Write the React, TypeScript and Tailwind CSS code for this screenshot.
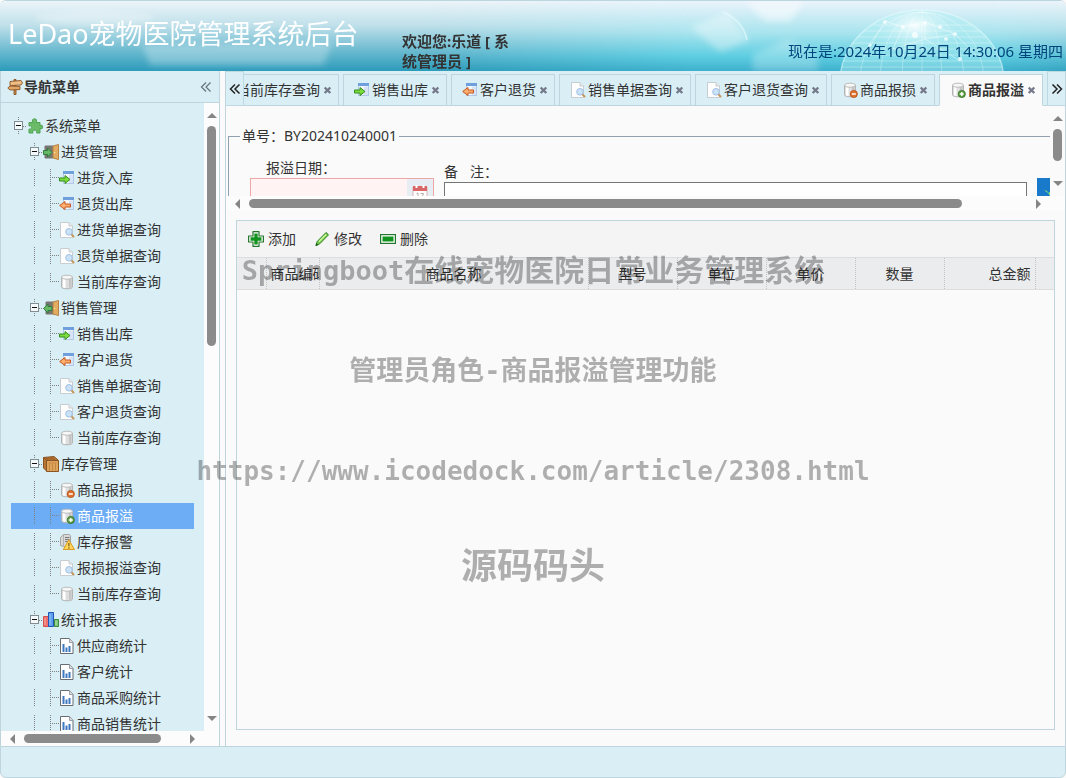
import React from "react";

type IconName =
  | "signpost" | "puzzle" | "doorIn" | "doorOut" | "goIn" | "goOut" | "search" | "db"
  | "dbMinus" | "dbPlus" | "box" | "alarm" | "chart" | "report" | "add" | "edit" | "remove" | "calendar" | "close";

const Cylinder = () => (
  <g>
    <path d="M2.500 3.200v9.600c0 1.200 2.300 2 5.500 2s5.500-.8 5.500-2V3.200z" fill="#dedede" stroke="#b4b4b4" />
    <path d="M4 4v9.400l2.500.7V4z" fill="#fff" />
    <path d="M10 5v9l2.500-.8V4z" fill="#c4c4c4" />
    <ellipse cx="8" cy="3.200" rx="5.500" ry="2" fill="#f7f7f7" stroke="#bdbdbd" />
  </g>
);

const MiniWindow = () => (
  <g>
    <rect x="4.500" y="1.500" width="10" height="12" fill="#f3f8ff" stroke="#b4c8e8" />
    <rect x="4" y="1" width="11" height="3" fill="#6f9fdc" />
    <path d="M10 4.500h4v8.500h-4z" fill="#d6e3f7" />
  </g>
);

const drawings: Record<IconName, React.ReactNode> = {
  signpost: (
    <g stroke="#8a5526" strokeWidth=".9">
      <path d="M7 .5h2v15H7z" fill="#c98a4b" />
      <path d="M3 2.500l11-1L15.500 4 14 6 3 6.500z" fill="#efbe86" />
      <path d="M13 7.500L3 7 .8 9 3 11l10-.5z" fill="#e4a869" />
    </g>
  ),
  puzzle: (
    <path d="M2 4.500h4c-1.200-1.700-.7-3.700 1.500-3.700s2.700 2 1.500 3.700h4v3.300c1.700-1.200 2.700-.6 2.700 1.200s-1 2.400-2.700 1.200v4.800H9.600c.8-2-.4-2.800-1.800-2.800s-2.600.8-1.800 2.800H2v-4c2 .6 2.600-.4 2.600-1.600S4 7.500 2 8z" fill="#6cbb69" stroke="#4fa354" />
  ),
  doorIn: (
    <g>
      <path d="M2 2h8v12H2z" fill="#77766f" stroke="#777" />
      <path d="M10 2l5.500-1.500v15L10 14z" fill="#e2ab62" stroke="#b98242" />
      <circle cx="11.500" cy="8.500" r=".7" fill="#fff2b0" />
      <path d="M.5 6.500h4V4l4.500 4.500L4.500 13v-2.500h-4z" fill="#66b867" stroke="#2e7d3c" />
    </g>
  ),
  doorOut: (
    <g>
      <path d="M3 2h8v12H3z" fill="#77766f" stroke="#777" />
      <path d="M10 2l5.500-1.500v15L10 14z" fill="#e2ab62" stroke="#b98242" />
      <circle cx="11.500" cy="8.500" r=".7" fill="#fff2b0" />
      <path d="M9 6.500H5V4L.5 8.500 5 13v-2.500h4z" fill="#66b867" stroke="#2e7d3c" />
    </g>
  ),
  goIn: (
    <g>
      <MiniWindow />
      <path d="M.5 8H6V5.500l5 4-5 4V11H.5z" fill="#7fdc3f" stroke="#318d1c" />
    </g>
  ),
  goOut: (
    <g>
      <MiniWindow />
      <path d="M11.500 8H6V5.500l-5.300 4 5.300 4V11h5.500z" fill="#ffae70" stroke="#c4591c" />
    </g>
  ),
  search: (
    <g>
      <path d="M1.500.5h8.500l3.500 3.500v11.500h-12z" fill="#fdfdfd" stroke="#c8cdd2" />
      <path d="M10 .5V4h3.500" fill="#e8e8e8" stroke="#c8cdd2" />
      <path d="M12.500 12.500L14.500 14.500" stroke="#c4975c" strokeWidth="2" strokeLinecap="round" />
      <circle cx="10" cy="9.800" r="3.300" fill="#c9e2f8" stroke="#a0bfe0" />
    </g>
  ),
  db: <Cylinder />,
  dbMinus: (
    <g>
      <Cylinder />
      <circle cx="11.800" cy="12" r="3.600" fill="#e0702c" stroke="#b24d13" strokeWidth=".8" />
      <path d="M9.800 12h4" stroke="#fff" strokeWidth="1.500" />
    </g>
  ),
  dbPlus: (
    <g>
      <Cylinder />
      <circle cx="11.800" cy="12" r="3.600" fill="#5d9f45" stroke="#34701f" strokeWidth=".8" />
      <path d="M9.800 12h4M11.800 10v4" stroke="#fff" strokeWidth="1.400" />
    </g>
  ),
  box: (
    <g stroke="#8a5424">
      <path d="M.5 1.500L11 .5l4 3.500v11.500H4L.5 12z" fill="#b87433" />
      <path d="M3.500 4.500h12v11h-12z" fill="#dfa45c" />
      <path d="M.5 1.500l3 3M2.500 1.500L6 4.500M5.500 1l3.500 3.500M8.500 1L12 4.500" stroke="#8a5424" />
      <path d="M5.500 7h8M6.500 7.500v7M9.500 7.500v7M12.500 7.500v7" stroke="#c28743" />
    </g>
  ),
  alarm: (
    <g>
      <path d="M4.500.5h6l1 1v11h-7l-3-1v-8z" fill="#d9d9d9" stroke="#a5a5a5" />
      <path d="M4.500 1v11" stroke="#b2b2b2" />
      <path d="M6 3.500h4.500M6 5.500h4.500M6 7.500h3" stroke="#777" />
      <path d="M9.800 5.800l5.700 9.700H4.300z" fill="#ffd65c" stroke="#dd9a1e" strokeLinejoin="round" />
      <path d="M9.900 9v3.300M9.900 13.200v1.200" stroke="#7c5512" strokeWidth="1.200" />
    </g>
  ),
  chart: (
    <g>
      <path d="M.5 4.500h5v10h-5z" fill="#f0706b" stroke="#d35050" />
      <path d="M5.500.5h5v14h-5z" fill="#5d9ff0" stroke="#1e55b5" />
      <path d="M11.500 7.500h4v7h-4z" fill="#7dc67a" stroke="#3d8b40" />
      <path d="M2 6v7M7 2v11M13 9v4" stroke="#fff" strokeOpacity=".4" />
    </g>
  ),
  report: (
    <g>
      <path d="M1.500.5h9l3.500 4v11H1.500z" fill="#fff" stroke="#686c73" />
      <path d="M10.500.5v4H14" fill="#ddd" stroke="#9b9fa6" />
      <path d="M4.500 6v8M7.500 9.500V14M10.500 8v6" stroke="#3f79c0" strokeWidth="2" />
    </g>
  ),
  add: (
    <g>
      <path d="M5 .6h6V5h4.400v6H11v4.400H5V11H.6V5H5z" fill="#fff" stroke="#23762b" strokeWidth="1.200" strokeLinejoin="round" />
      <path d="M8 2.500v11M2.500 8h11" stroke="#129320" strokeWidth="3.400" />
    </g>
  ),
  edit: (
    <g>
      <path d="M2 14.500l1.200-4L12 1.500l2.500 2.300-8.800 9z" fill="#7fd24d" stroke="#27791f" />
      <path d="M5 10.500l7-7" stroke="#d2f7a6" strokeWidth="1.200" />
      <path d="M1.500 15l.8-3 2.200 2z" fill="#195b16" />
    </g>
  ),
  remove: (
    <g>
      <rect x=".6" y="3.600" width="14.800" height="8.800" fill="#fff" stroke="#23762b" strokeWidth="1.200" />
      <rect x="2.500" y="5.500" width="11" height="5" fill="#129320" />
    </g>
  ),
  calendar: (
    <g>
      <path d="M1 3h14v12H1z" fill="#fff" stroke="#dcb6b6" />
      <path d="M1 2h14v5H1z" fill="#d96767" />
      <path d="M4.500 1v3M11.500 1v3" stroke="#fff" strokeWidth="2" />
      <path d="M4.500 9.500L6 9v6M8.500 9.500h3L9.500 15" stroke="#b9a9a9" fill="none" />
    </g>
  ),
  close: <path d="M4.700 5.500l5.600 5.500M10.300 5.500L4.700 11" stroke="#75798a" strokeWidth="2.400" />,
};

function Icon({ name }: { name: IconName }) {
  return (
    <svg viewBox="0 0 16 16" className="h-4 w-4 shrink-0" fill="none" aria-hidden="true">
      {drawings[name]}
    </svg>
  );
}

function Chevrons({ right, thin }: { right?: boolean; thin?: boolean }) {
  return (
    <svg viewBox="0 0 12 12" className="h-3 w-3" fill="none" stroke={thin ? "#66747a" : "#222"} strokeWidth={thin ? "1.2" : "1.5"} aria-hidden="true">
      <path d={right ? "M1.500 1.500L6 6l-4.500 4.500M6 1.500L10.500 6 6 10.500" : "M6 1.500L1.500 6 6 10.500M10.500 1.500L6 6l4.500 4.500"} />
    </svg>
  );
}

const arrows = {
  up: "M4 0l5 5H-1z",
  down: "M-1 0h10L4 5z",
  left: "M5-1v10L0 4z",
  right: "M0-1v10l5-5z",
};

function Arrow({ dir }: { dir: keyof typeof arrows }) {
  const vertical = dir === "up" || dir === "down";
  return (
    <svg viewBox={vertical ? "-1 0 10 5" : "0 -1 5 10"} className={vertical ? "h-[5px] w-[10px] shrink-0" : "h-[10px] w-[5px] shrink-0"} aria-hidden="true">
      <path d={arrows[dir]} fill="#858585" />
    </svg>
  );
}

type Node = { text: string; icon: IconName; depth: 0 | 1 | 2; last?: boolean; selected?: boolean };

const nodes: Node[] = [
  { text: "系统菜单", icon: "puzzle", depth: 0 },
  { text: "进货管理", icon: "doorIn", depth: 1 },
  { text: "进货入库", icon: "goIn", depth: 2 },
  { text: "退货出库", icon: "goOut", depth: 2 },
  { text: "进货单据查询", icon: "search", depth: 2 },
  { text: "退货单据查询", icon: "search", depth: 2 },
  { text: "当前库存查询", icon: "db", depth: 2, last: true },
  { text: "销售管理", icon: "doorOut", depth: 1 },
  { text: "销售出库", icon: "goIn", depth: 2 },
  { text: "客户退货", icon: "goOut", depth: 2 },
  { text: "销售单据查询", icon: "search", depth: 2 },
  { text: "客户退货查询", icon: "search", depth: 2 },
  { text: "当前库存查询", icon: "db", depth: 2, last: true },
  { text: "库存管理", icon: "box", depth: 1 },
  { text: "商品报损", icon: "dbMinus", depth: 2 },
  { text: "商品报溢", icon: "dbPlus", depth: 2, selected: true },
  { text: "库存报警", icon: "alarm", depth: 2 },
  { text: "报损报溢查询", icon: "search", depth: 2 },
  { text: "当前库存查询", icon: "db", depth: 2, last: true },
  { text: "统计报表", icon: "chart", depth: 1 },
  { text: "供应商统计", icon: "report", depth: 2 },
  { text: "客户统计", icon: "report", depth: 2 },
  { text: "商品采购统计", icon: "report", depth: 2 },
  { text: "商品销售统计", icon: "report", depth: 2 },
];

function Guide({ kind }: { kind: "line" | "join" | "joinLast" | "toggle" }) {
  return (
    <svg viewBox="0 0 16 18" className="h-[18px] w-4 shrink-0" fill="none" aria-hidden="true">
      {kind === "toggle" ? (
        <g>
          <path d="M7.500 0v18M12 9.500h4" stroke="#808080" strokeDasharray="1 1" />
          <rect x="3.500" y="4.500" width="8" height="8" fill="#f4fafc" stroke="#838c90" />
          <path d="M5 8.500h5" stroke="#111" />
        </g>
      ) : (
        <g stroke="#808080" strokeDasharray="1 1">
          <path d={kind === "joinLast" ? "M7.500 0v9" : "M7.500 0v18"} />
          {kind !== "line" && <path d="M9 8.500h7" />}
        </g>
      )}
    </svg>
  );
}

function Tree() {
  return (
    <ul className="min-w-0 flex-1 overflow-hidden bg-[#d9eef5] p-[10px]">
      {nodes.map((n, i) => (
        <li key={i}>
          <a
            href="#"
            className={`flex h-[26px] items-center whitespace-nowrap ${n.selected ? "bg-[#6cadf6] text-white" : "text-[#333]"}`}
          >
            {n.depth > 0 && <span className="w-4 shrink-0" />}
            {n.depth === 2 && <Guide kind="line" />}
            {n.depth === 2 ? <Guide kind={n.last ? "joinLast" : "join"} /> : <Guide kind="toggle" />}
            <Icon name={n.icon} />
            <span className="pl-[2px]">{n.text}</span>
          </a>
        </li>
      ))}
    </ul>
  );
}

const tabs: { text: string; icon: IconName; active?: boolean }[] = [
  { text: "当前库存查询", icon: "db" },
  { text: "销售出库", icon: "goIn" },
  { text: "客户退货", icon: "goOut" },
  { text: "销售单据查询", icon: "search" },
  { text: "客户退货查询", icon: "search" },
  { text: "商品报损", icon: "dbMinus" },
  { text: "商品报溢", icon: "dbPlus", active: true },
];

function Tabs() {
  return (
    <div className="flex h-[35px] shrink-0 bg-[#d9eef5]">
      <button aria-label="向左滚动" className="flex w-[18px] shrink-0 items-center justify-center border border-l-0 border-[#bfd9e2]">
        <Chevrons />
      </button>
      <div className="flex min-w-0 flex-1 items-end justify-end gap-1 overflow-hidden pr-1 shadow-[inset_0_-1px_0_#bfd5dd]">
        {tabs.map((t) => (
          <div
            key={t.text + t.icon}
            className={`flex h-8 shrink-0 items-center border border-[#bfd5dd] pl-[10px] pr-[2px] ${t.active ? "border-b-[#fafafa] bg-[#fafafa] font-bold" : ""}`}
          >
            <button className="flex items-center gap-[2px] whitespace-nowrap">
              <Icon name={t.icon} />
              {t.text}
            </button>
            <button aria-label="关闭">
              <Icon name="close" />
            </button>
          </div>
        ))}
      </div>
      <button aria-label="向右滚动" className="flex w-[18px] shrink-0 items-center justify-center border border-r-0 border-[#bfd9e2]">
        <Chevrons right />
      </button>
    </div>
  );
}

function HeaderArt() {
  return (
    <svg className="absolute inset-0 h-full w-full" viewBox="0 0 1066 70" preserveAspectRatio="none" aria-hidden="true">
      <defs>
        <linearGradient id="sky" x1="0" y1="0" x2="0" y2="1">
          <stop offset="0" stopColor="#ecf5f9" />
          <stop offset=".35" stopColor="#bfe0ea" />
          <stop offset=".75" stopColor="#62b6cd" />
          <stop offset="1" stopColor="#2c9bba" />
        </linearGradient>
        <linearGradient id="cyan" x1="0" y1="0" x2="0" y2="1">
          <stop offset="0" stopColor="#eaf3fb" />
          <stop offset=".45" stopColor="#a9e4ee" />
          <stop offset=".8" stopColor="#5ccde1" />
          <stop offset="1" stopColor="#3fb0cd" />
        </linearGradient>
        <linearGradient id="fade" x1="0" x2="1">
          <stop offset=".4" stopColor="#000" />
          <stop offset=".65" stopColor="#fff" />
          <stop offset=".93" stopColor="#fff" />
          <stop offset="1" stopColor="#777" />
        </linearGradient>
        <mask id="side"><rect width="1066" height="70" fill="url(#fade)" /></mask>
        <radialGradient id="glow" cx=".5" cy=".4">
          <stop offset="0" stopColor="#fff" stopOpacity=".9" />
          <stop offset="1" stopColor="#7cdcea" stopOpacity="0" />
        </radialGradient>
        <filter id="soft"><feGaussianBlur stdDeviation="3" /></filter>
        <clipPath id="ball"><ellipse cx="922" cy="80" rx="82" ry="71" /></clipPath>
      </defs>
      <rect width="1066" height="70" fill="url(#sky)" />
      <rect width="1066" height="70" fill="url(#cyan)" mask="url(#side)" />
      <g filter="url(#soft)" fill="#fff">
        <ellipse cx="95" cy="17" rx="60" ry="7" opacity=".3" />
        <path d="M142 44l190-2-8 22H150z" opacity=".28" />
        <path d="M690 26l38-15 22 28-30 12z" opacity=".35" />
        <path d="M745 0h60l-15 20h-25z" opacity=".5" />
        <path d="M752 54l36-16 30 14v18h-65z" opacity=".25" />
      </g>
      <path d="M723 11q20 9 24 28" fill="none" stroke="#eafcff" strokeOpacity=".6" strokeWidth="1.500" />
      <g clipPath="url(#ball)">
        <rect x="840" width="170" height="70" fill="#bdf4f6" opacity=".4" />
        <ellipse cx="915" cy="32" rx="60" ry="36" fill="url(#glow)" />
        <g fill="none" stroke="#fff" strokeOpacity=".3">
          <ellipse cx="922" cy="80" rx="62" ry="69" />
          <ellipse cx="922" cy="80" rx="42" ry="69" />
          <ellipse cx="922" cy="80" rx="20" ry="69" />
          <path d="M840 66h170M840 60h170M840 54h170M840 48h170M840 42h170M840 36h170M840 30h170M840 24h170M922 0v70" />
        </g>
        <path d="M885 20l18 6 22-5 30 12 22 22M885 20l-20 34M903 26l-10 22 32-10 30-5M925 21v17l35 22" fill="none" stroke="#fff" strokeOpacity=".4" />
        <g fill="#fff" fillOpacity=".7">
          <circle cx="903" cy="26" r="2" /><circle cx="925" cy="22" r="2" /><circle cx="940" cy="26" r="2" />
          <circle cx="955" cy="33" r="2" /><circle cx="885" cy="21" r="2" /><circle cx="960" cy="58" r="2" />
          <circle cx="915" cy="34" r="3" /><circle cx="946" cy="38" r="2" /><circle cx="870" cy="44" r="1.500" />
        </g>
      </g>
      <ellipse cx="922" cy="80" rx="82" ry="71" fill="none" stroke="#effeff" strokeOpacity=".45" strokeWidth="1.500" />
    </svg>
  );
}

const columns = [
  { text: "", width: "w-[29px]", align: "text-center" },
  { text: "商品编码", width: "w-[53px]", align: "text-left" },
  { text: "商品名称", width: "", align: "text-center" },
  { text: "型号", width: "w-[89px]", align: "text-center" },
  { text: "单位", width: "w-[89px]", align: "text-center" },
  { text: "单价", width: "w-[89px]", align: "text-center" },
  { text: "数量", width: "w-[89px]", align: "text-center" },
  { text: "总金额", width: "w-[91px]", align: "text-right" },
];

const tools: { text: string; icon: IconName }[] = [
  { text: "添加", icon: "add" },
  { text: "修改", icon: "edit" },
  { text: "删除", icon: "remove" },
];

export default function App() {
  return (
    <div className="relative flex h-screen flex-col overflow-hidden bg-[#fafafa] font-['Noto_Sans','Noto_Sans_CJK_SC',sans-serif] text-sm leading-5 text-[#333]">
      <header className="relative flex h-[71px] shrink-0 overflow-hidden rounded-t-md border-t border-[#bcd6df]">
        <HeaderArt />
        <h1 className="relative w-[402px] shrink-0 pl-2 pt-[13px] text-[27px] leading-10 text-white">LeDao宠物医院管理系统后台</h1>
        <div className="relative w-[120px] shrink-0 pt-[30px] text-[15px] font-bold leading-5">欢迎您:乐道 [ 系统管理员 ]</div>
        <div className="relative flex-1 whitespace-nowrap pr-[3px] pt-[40px] text-right text-[15px] leading-5 text-[#00457b]">
          现在是:2024年10月24日 14:30:06 星期四
        </div>
      </header>

      <div className="flex min-h-0 flex-1">
        <aside className="flex w-[220px] shrink-0 flex-col border-x border-[#bfd5dd]">
          <div className="flex h-8 shrink-0 items-center border-b border-[#bfd5dd] bg-[#d9eef5] pl-[6px] pr-[7px]">
            <Icon name="signpost" />
            <h2 className="flex-1 pl-px font-bold">导航菜单</h2>
            <button aria-label="折叠菜单"><Chevrons thin /></button>
          </div>
          <div className="flex min-h-0 flex-1">
            <Tree />
            <div className="flex w-[15px] shrink-0 flex-col items-center bg-[#fcfcfc] pb-[10px] pt-[10px]">
              <Arrow dir="up" />
              <div className="mt-2 h-[220px] w-[9px] rounded-full bg-[#8b8b8b]" />
              <div className="flex-1" />
              <Arrow dir="down" />
            </div>
          </div>
          <div className="flex h-[15px] shrink-0 items-center bg-[#fcfcfc] pl-[9px] pr-6">
            <Arrow dir="left" />
            <div className="ml-[9px] h-[9px] w-[137px] rounded-full bg-[#8b8b8b]" />
            <div className="flex-1" />
            <Arrow dir="right" />
          </div>
        </aside>

        <main className="ml-[5px] flex min-w-0 flex-1 flex-col border-x border-[#bfd5dd]">
          <Tabs />
          <section className="flex h-[105px] shrink-0 flex-col">
            <div className="flex min-h-0 flex-1">
              <div className="min-w-0 flex-1 overflow-hidden pl-[2px] pt-5">
                <fieldset className="-mr-1 h-[120px] border border-[#929fae] pl-[9px]">
                  <legend className="ml-[2px] px-[2px]">单号：BY202410240001</legend>
                  <div className="flex pl-3">
                    <div className="w-[184px] shrink-0 pt-3">
                      <label htmlFor="date" className="block pl-4">报溢日期：</label>
                      <div className="flex h-8 border border-[#eda7a7] bg-[#fff3f3]">
                        <input id="date" className="min-w-0 flex-1 bg-transparent outline-none" />
                        <button aria-label="选择日期" className="flex w-[26px] justify-center bg-[#e6eef3] pt-[5px]">
                          <Icon name="calendar" />
                        </button>
                      </div>
                    </div>
                    <div className="ml-[10px] min-w-0 flex-1 pt-4">
                      <label htmlFor="note" className="flex gap-3"><span>备</span><span>注：</span></label>
                      <input id="note" className="block h-8 w-full border border-[#767676] bg-white outline-none" />
                    </div>
                    <button aria-label="保存" className="ml-[10px] mr-[3px] mt-8 flex h-8 w-[13px] shrink-0 justify-end overflow-hidden bg-[#1979ca]">
                      <svg viewBox="0 0 6 18" className="h-[18px] w-[6px]" aria-hidden="true">
                        <path d="M0 12l3 1 3 5V14l-2 1z" fill="#8ff06a" />
                      </svg>
                    </button>
                  </div>
                </fieldset>
              </div>
              <div className="flex w-[15px] shrink-0 flex-col items-center pb-[10px] pt-[10px]">
                <Arrow dir="up" />
                <div className="mt-2 h-8 w-[9px] rounded-full bg-[#8b8b8b]" />
                <div className="flex-1" />
                <Arrow dir="down" />
              </div>
            </div>
            <div className="flex h-[15px] shrink-0 items-center bg-[#fcfcfc] pl-[9px] pr-6">
              <Arrow dir="left" />
              <div className="ml-[9px] mr-[74px] h-[9px] flex-1 rounded-full bg-[#8b8b8b]" />
              <Arrow dir="right" />
            </div>
          </section>

          <section className="mb-4 ml-[10px] mr-[10px] mt-[9px] flex min-h-0 flex-1 flex-col border border-[#bfd5dd]">
            <div className="flex h-9 shrink-0 items-center gap-[18px] bg-[#f4f4f4] pl-[11px]">
              {tools.map((t) => (
                <button key={t.text} className="flex items-center gap-1">
                  <Icon name={t.icon} />
                  {t.text}
                </button>
              ))}
            </div>
            <table className="w-full table-fixed border-y border-[#ddd] bg-[#ebecee]">
              <thead>
                <tr className="h-8">
                  {columns.map((c) => (
                    <th
                      key={c.text}
                      scope="col"
                      className={`overflow-hidden whitespace-nowrap border-r border-dotted border-[#c4c4c4] px-1 font-normal ${c.width} ${c.align}`}
                    >
                      {c.text}
                    </th>
                  ))}
                  <th className="w-[19px]" />
                </tr>
              </thead>
            </table>
          </section>
        </main>
      </div>

      <footer className="h-8 shrink-0 rounded-b-md border border-[#bfd5dd] bg-[#d9eef5]" />

      <div className="pointer-events-none absolute inset-0 flex flex-col items-center whitespace-nowrap pt-[251px] font-['DejaVu_Sans_Mono','Noto_Sans_CJK_SC',monospace] font-bold text-black opacity-30">
        <p className="flex items-center text-[30px] leading-10"><span className="text-[27px]">Springboot</span>在线宠物医院日常业务管理系统</p>
        <p className="mt-[60px] text-[27px] leading-10">管理员角色-商品报溢管理功能</p>
        <p className="mt-[60px] text-[26px] leading-10">https://www.icodedock.com/article/2308.html</p>
        <p className="mt-14 text-4xl leading-10">源码码头</p>
      </div>
    </div>
  );
}
